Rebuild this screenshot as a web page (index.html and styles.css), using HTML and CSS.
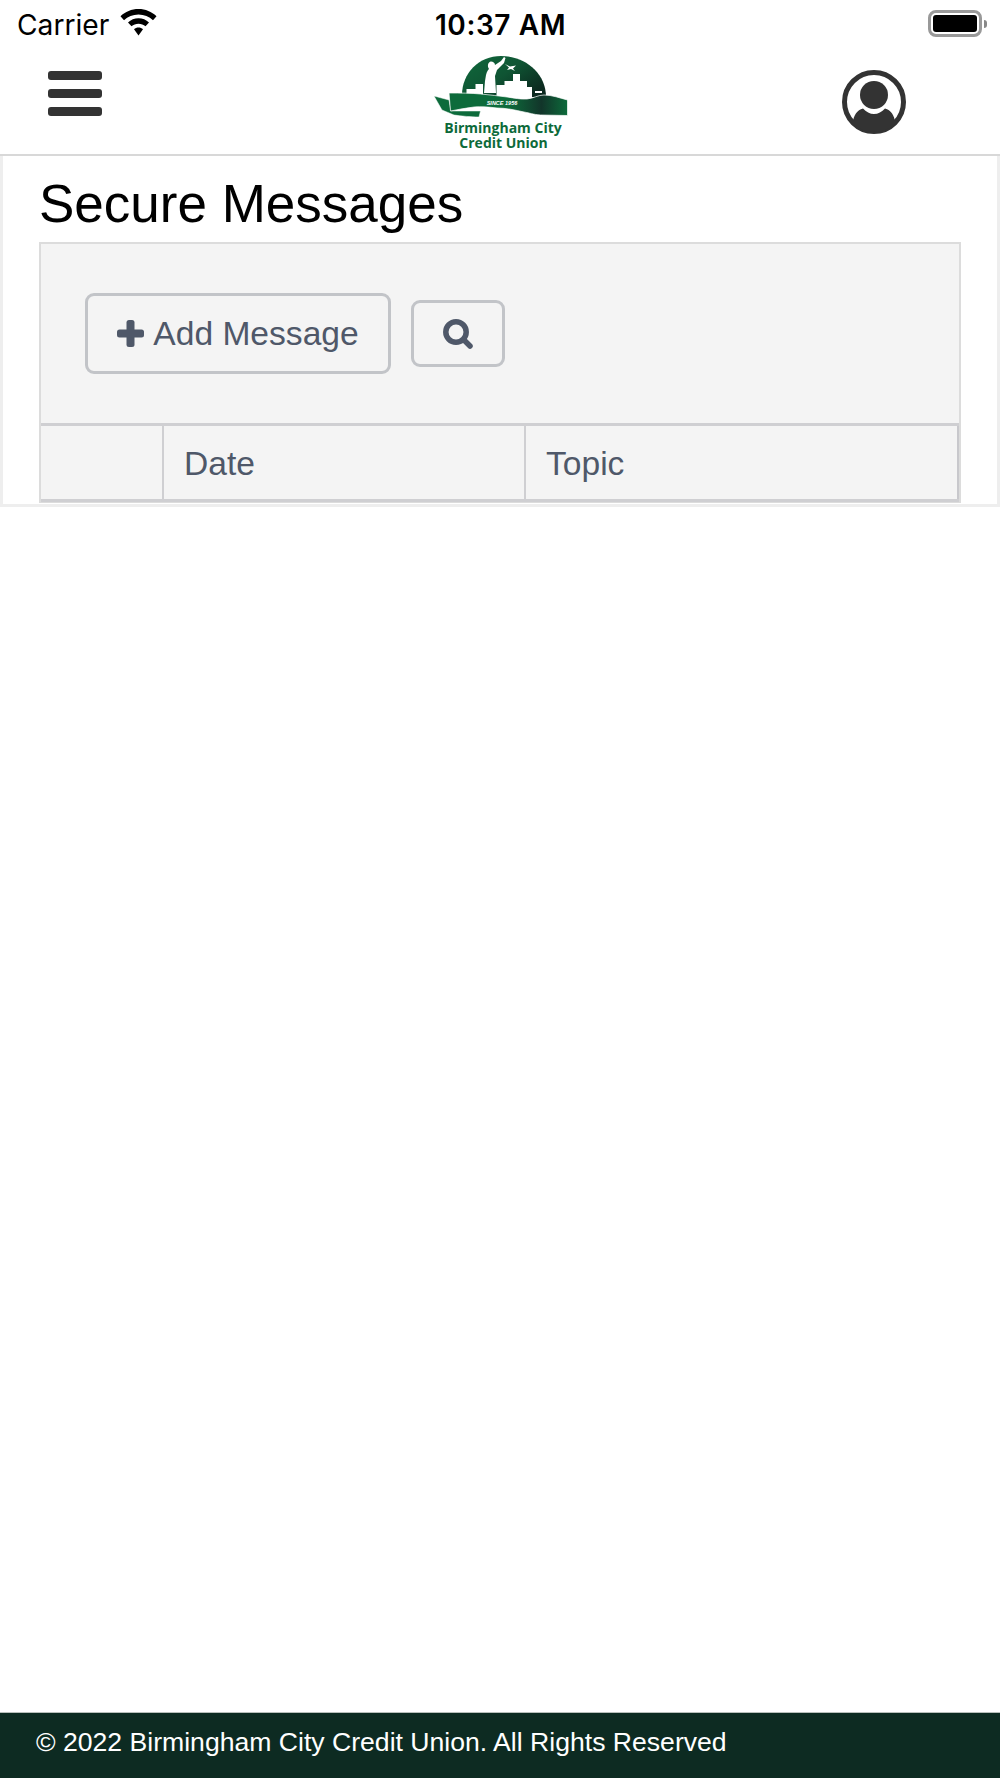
FILE: index.html
```html
<!DOCTYPE html>
<html lang="en">
<head>
  <meta charset="UTF-8">
  <meta name="viewport" content="width=device-width, initial-scale=1.0">
  <title>Secure Messages</title>
  <link rel="stylesheet" href="styles.css">
</head>
<body>
  <div class="app">
    <div class="status-bar">
      <div class="status-left">
        <span class="carrier">Carrier</span>
        <svg class="wifi" viewBox="0 0 37 27">
          <path d="M18.500 0C11.500 0 5.300 2.700 0.500 7.200L4 11.200C7.800 7.700 12.900 5.500 18.500 5.500C24.100 5.500 29.200 7.700 33 11.200L36.500 7.200C31.700 2.700 25.500 0 18.500 0Z"/>
          <path d="M18.500 9.300C14.500 9.300 10.800 10.900 8 13.400L11.500 17.300C13.400 15.700 15.800 14.700 18.500 14.700C21.200 14.700 23.600 15.700 25.500 17.300L29 13.400C26.200 10.900 22.500 9.300 18.500 9.300Z"/>
          <path d="M18.500 18.500C16.800 18.500 15.200 19.100 14 20.200L18.500 26.500L23 20.200C21.800 19.100 20.200 18.500 18.500 18.500Z"/>
        </svg>
      </div>
      <span class="clock">10:37 AM</span>
      <div class="battery"><div class="battery-body"><div class="battery-level"></div></div><div class="battery-cap"></div></div>
    </div>

    <header class="top-nav">
      <div class="menu-icon"><span></span><span></span><span></span></div>
      <svg class="logo" viewBox="0 0 135 96">
        <defs>
          <linearGradient id="domeFill" x1="0" y1="0" x2="1" y2="0.7">
            <stop offset="0" stop-color="#0f6a3c"/>
            <stop offset="0.55" stop-color="#0f5433"/>
            <stop offset="1" stop-color="#0c2a20"/>
          </linearGradient>
          <linearGradient id="ribbonFill" x1="0" y1="0" x2="1" y2="0">
            <stop offset="0" stop-color="#0d6b3b"/>
            <stop offset="0.5" stop-color="#0d6b3b"/>
            <stop offset="0.78" stop-color="#12352a"/>
            <stop offset="1" stop-color="#0d6b3b"/>
          </linearGradient>
        </defs>
        <path d="M29 40C29 18 46 1 68 1C92 1 113 18 113 42L29 42Z" fill="url(#domeFill)"/>
        <!-- skyline -->
        <path d="M33.500 40V34H42.500V29H50V40ZM63.500 42V30H71.500V26H80V19H87V26H94V32H99V42ZM102 38V36H109V38Z" fill="#fff"/>
        <!-- figure and plane -->
        <path d="M51 38L52 26L53 20C54 16 55 15 56 14C54 11 55 7 58 6.500C60 6.500 62 8 62 10L68 6L71 2L72.500 3L71 8L64 15L62 21L63 38Z" fill="#fff"/>
        <path d="M72 9L77 11.500L83 10.500L80 13.500L82 16L78 14L74 15L76 12.500Z" fill="#fff"/>
        <!-- ribbon -->
        <path d="M1 41L16 45L18 56L47.500 56L46 62C38 62 28 61 21 60C17 58 13 57 9 55Z" fill="#0d6b3b" stroke="#fff" stroke-width="0.5"/>
        <path d="M16 38C27 38 38 38 47.500 39C58 40 66 41 74 42C81 43 88 44.500 94 44C100 43.500 105 40 111 40C119 40 127 43 134.500 45L134.500 60.500L107.500 60C100 59.500 97 58 91 57C82 55 73 53 64 53C56 52 48 51.500 41 52C33 53 25 54.500 17.500 56Z" fill="url(#ribbonFill)" stroke="#fff" stroke-width="0.7"/>
        <text class="logo-since" x="69" y="50" text-anchor="middle">SINCE 1956</text>
        <text class="logo-name" x="70" y="78" text-anchor="middle">Birmingham City</text>
        <text class="logo-name" x="70.500" y="93" text-anchor="middle">Credit Union</text>
      </svg>
      <svg class="profile-icon" viewBox="0 0 64 64">
        <circle cx="32" cy="32" r="29.500" fill="#fff" stroke="#333" stroke-width="5"/>
        <circle cx="32" cy="25" r="14" fill="#333"/>
        <path d="M10.500 53C12 45 15 40 21 38.500C24 42 28 44 32 44C36 44 40 42 43 38.500C49 40 52 45 53.500 53C48 59 40 62 32 62C24 62 16 59 10.500 53Z" fill="#333"/>
      </svg>
    </header>

    <main class="content">
      <section class="page-box">
        <h1 class="page-title">Secure Messages</h1>
        <div class="grid-panel">
          <div class="toolbar">
            <button class="btn btn-add">
              <svg class="icon-plus" viewBox="0 0 27 27"><rect x="9.500" y="0" width="8" height="27" rx="2.500" fill="#4f5869"/><rect x="0" y="9.500" width="27" height="8" rx="2.500" fill="#4f5869"/></svg>
              Add Message
            </button>
            <button class="btn btn-search">
              <svg class="icon-search" viewBox="0 0 30 30"><circle cx="13" cy="13" r="10.200" fill="none" stroke="#4f5869" stroke-width="5.500"/><path d="M21 21L27 27" stroke="#4f5869" stroke-width="5.500" stroke-linecap="round"/></svg>
            </button>
          </div>
          <table class="grid-table">
            <thead>
              <tr>
                <th class="col-action"></th>
                <th class="col-date">Date</th>
                <th>Topic</th>
              </tr>
            </thead>
          </table>
        </div>
      </section>
    </main>

    <footer class="site-footer">© 2022 Birmingham City Credit Union. All Rights Reserved</footer>
  </div>
</body>
</html>
```

FILE: styles.css
```css
* {
  box-sizing: border-box;
}

body {
  margin: 0;
  font-family: "Liberation Sans", Arial, sans-serif;
  background: #fff;
}

.app {
  height: 1778px;
  display: flex;
  flex-direction: column;
}

/* status bar */
.status-bar {
  height: 48px;
  padding: 0 13px 0 17px;
  display: grid;
  grid-template-columns: 1fr auto 1fr;
  align-items: center;
  color: #000;
}

.status-left {
  display: flex;
  align-items: center;
  gap: 11px;
}

.carrier {
  font-family: Inter, sans-serif;
  font-size: 28.2px;
  margin-top: 2px;
}

.wifi {
  width: 37px;
  height: 27px;
  margin-top: -3px;
}

.clock {
  font-family: Inter, sans-serif;
  font-size: 28px;
  font-weight: 600;
  letter-spacing: 0.6px;
  margin: 2px 0 0 -3px;
}

.battery {
  justify-self: end;
  display: flex;
  align-items: center;
  gap: 2px;
  margin-top: -1px;
}

.battery-body {
  width: 54px;
  height: 27px;
  padding: 2px;
  border: 3px solid #999;
  border-radius: 8px;
}

.battery-level {
  height: 100%;
  background: #000;
  border-radius: 3px;
}

.battery-cap {
  width: 3px;
  height: 8px;
  background: #888;
  border-radius: 0 3px 3px 0;
}

/* top nav */
.top-nav {
  height: 108px;
  display: grid;
  grid-template-columns: 1fr auto 1fr;
  align-items: start;
  border-bottom: 2px solid #d8d8d8;
}

.menu-icon {
  width: 54px;
  margin: 23px 0 0 48px;
  display: flex;
  flex-direction: column;
  gap: 9px;
}

.menu-icon span {
  height: 9px;
  background: #333;
  border-radius: 3px;
}

.logo {
  width: 135px;
  height: 96px;
  margin-top: 7px;
}

.logo-since {
  font-size: 5.500px;
  font-weight: bold;
  font-style: italic;
  fill: #fff;
}

.logo-name {
  font-family: "Open Sans", sans-serif;
  font-size: 14px;
  font-weight: 700;
  fill: #0d6a3a;
}

.profile-icon {
  width: 64px;
  height: 64px;
  margin: 22px 94px 0 0;
  justify-self: end;
}

/* content */
.content {
  flex: 1;
}

.page-box {
  height: 351px;
  padding: 0 36px;
  border: 3px solid #eeeeee;
  border-top: none;
}

.page-title {
  margin: 0;
  height: 86px;
  line-height: 96px;
  font-size: 53px;
  font-weight: normal;
  color: #000;
}

.grid-panel {
  background: #f4f4f4;
  border: 2px solid #dcdcdc;
  border-bottom: 1px solid #dcdcdc;
}

.toolbar {
  height: 179px;
  padding: 49px 0 0 44px;
  display: flex;
  align-items: flex-start;
  gap: 20px;
}

.btn {
  display: flex;
  align-items: center;
  justify-content: center;
  background: #f4f4f4;
  border: 3px solid #c2c4c8;
  border-radius: 9px;
  color: #4f5869;
  font-family: "Liberation Sans", Arial, sans-serif;
  font-size: 33.6px;
}

.btn-add {
  width: 306px;
  height: 81px;
  gap: 9px;
}

.icon-plus {
  width: 27px;
  height: 27px;
}

.btn-search {
  width: 94px;
  height: 67px;
  margin-top: 7px;
}

.icon-search {
  width: 30px;
  height: 30px;
}

.grid-table {
  width: 100%;
  height: 79px;
  border-collapse: collapse;
  table-layout: fixed;
  border-top: 3px solid #cfcfd2;
  border-right: 2px solid #c8c8cc;
  border-bottom: 3px solid #cfcfd2;
}

.grid-table th {
  padding: 2px 0 0 20px;
  border-left: 2px solid #cfcfd2;
  text-align: left;
  font-size: 33.6px;
  font-weight: normal;
  color: #4f5869;
}

.grid-table th:first-child {
  border-left: none;
}

.col-action {
  width: 122px;
}

.col-date {
  width: 362px;
}

/* footer */
.site-footer {
  height: 66px;
  padding: 0 0 6px 36px;
  display: flex;
  align-items: center;
  background: #0d2b22;
  border-top: 1px solid #b9c0bd;
  color: #fff;
  font-size: 26.6px;
}
```
